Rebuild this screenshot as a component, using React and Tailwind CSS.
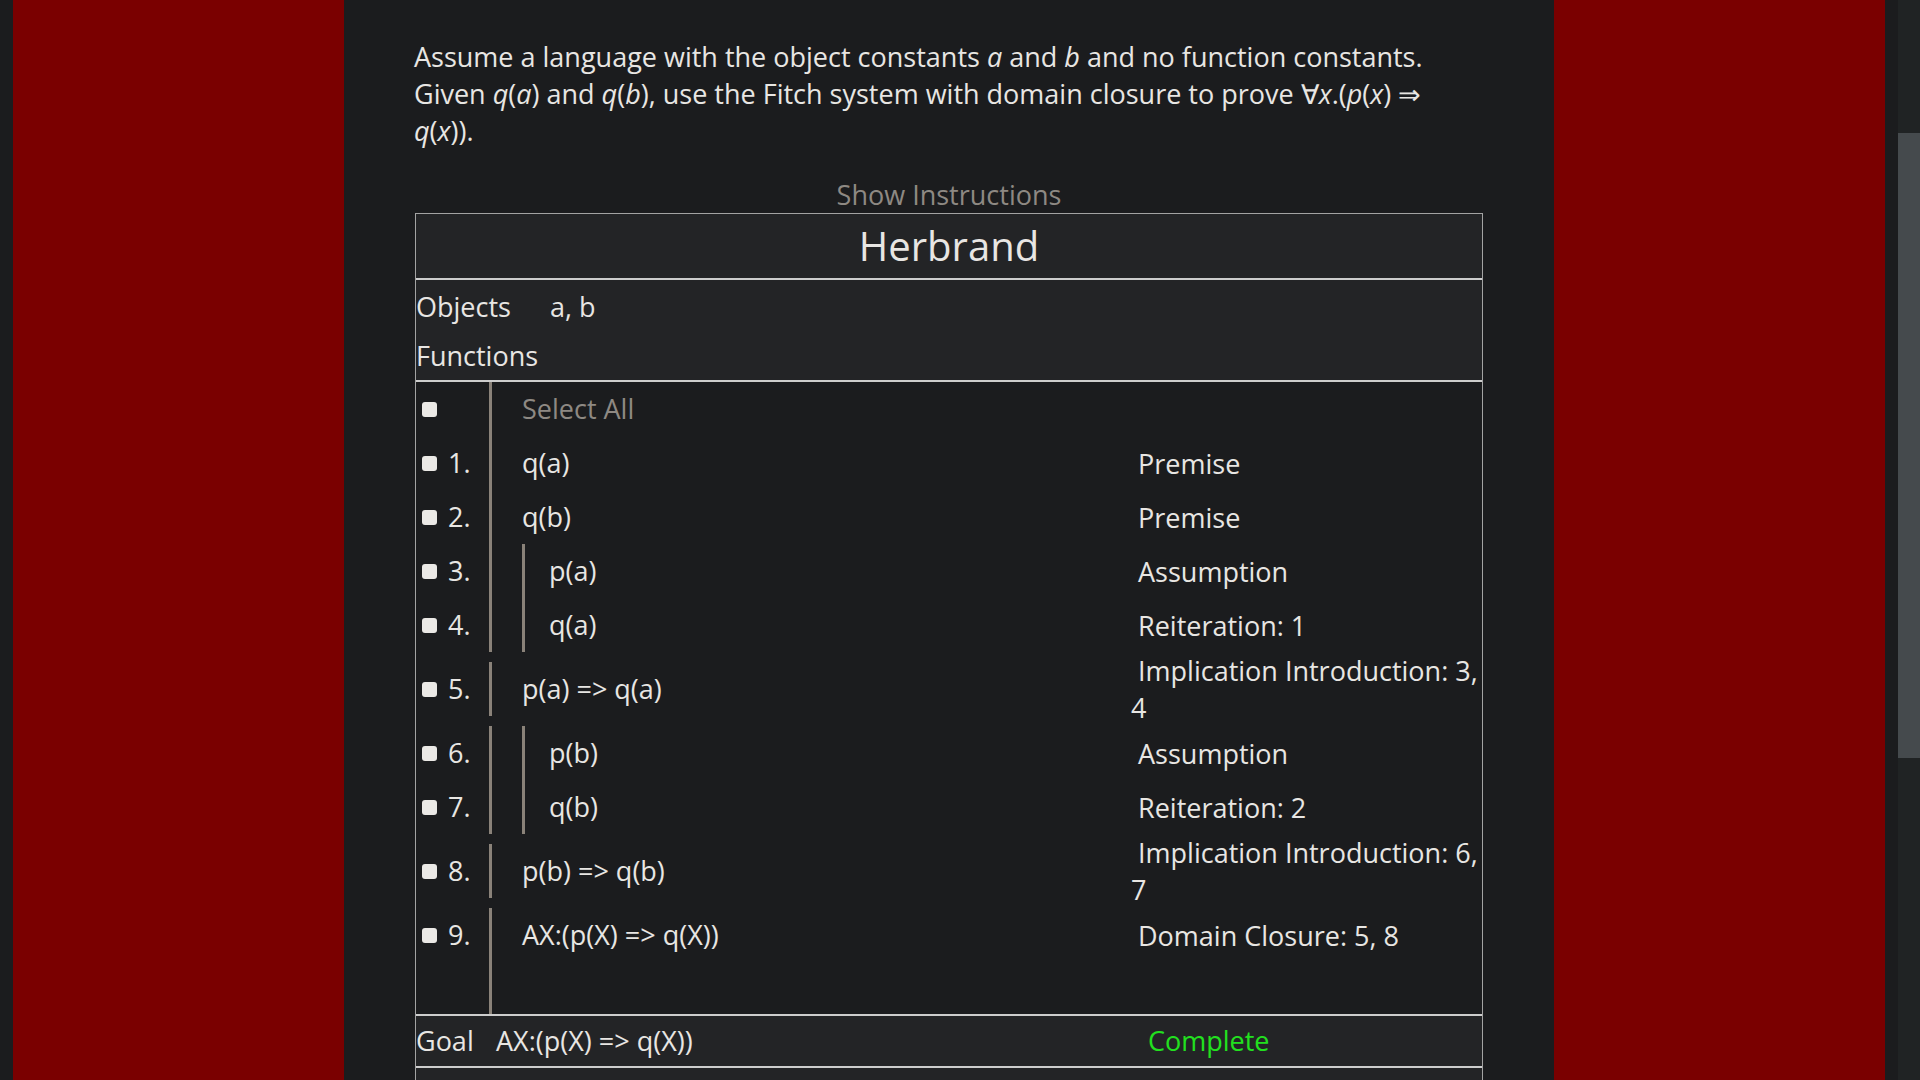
import React from "react";

const BAR = "border-[#8a8279]";

function Check() {
  return <span className="block w-[15px] h-[15px] rounded-[3px] bg-[#ebe9e6] shrink-0" />;
}

function Row({ n, f, j, nested, tall, gray, empty }) {
  return (
    <div className={`flex items-center ${tall ? "h-[74px]" : empty ? "h-[52px]" : "h-[54px]"}`}>
      <div className="w-[73px] h-full flex items-center pl-[6px]">
        {!empty && <Check />}
        {n && <span className="ml-[11px]">{n}</span>}
      </div>
      <div className={`w-[642px] ${empty ? "h-[52px]" : "h-[54px]"} border-l-[3px] ${BAR} pl-[30px] flex items-center`}>
        {nested ? (
          <div className={`h-full border-l-[3px] ${BAR} pl-[24px] flex items-center`}>{f}</div>
        ) : (
          <span className={gray ? "text-[#8e8983]" : ""}>{f}</span>
        )}
      </div>
      <div className="flex-1 leading-[37px] pr-[2px]">{j ? "\u00a0" + j : ""}</div>
    </div>
  );
}

const rows = [
  { n: "1.", f: "q(a)", j: "Premise" },
  { n: "2.", f: "q(b)", j: "Premise" },
  { n: "3.", f: "p(a)", j: "Assumption", nested: true },
  { n: "4.", f: "q(a)", j: "Reiteration: 1", nested: true },
  { n: "5.", f: "p(a) => q(a)", j: "Implication Introduction: 3, 4", tall: true },
  { n: "6.", f: "p(b)", j: "Assumption", nested: true },
  { n: "7.", f: "q(b)", j: "Reiteration: 2", nested: true },
  { n: "8.", f: "p(b) => q(b)", j: "Implication Introduction: 6, 7", tall: true },
  { n: "9.", f: "AX:(p(X) => q(X))", j: "Domain Closure: 5, 8" },
];

export default function App() {
  return (
    <div className="h-[1080px] w-[1920px] overflow-hidden flex bg-[#1b1c1e] font-['Open_Sans',sans-serif] text-[#e8e6e3] text-[27px]">
      <div className="w-[1898px] h-full flex px-[13px]">
        <div className="w-[331px] h-full bg-[#7a0000]" />
        <div className="w-[1210px] h-full px-[71px] pt-[38px] bg-[#1b1c1e]">
          <p className="leading-[37px] -ml-[1px]">
            Assume a language with the object constants <i>a</i> and <i>b</i> and no function constants. Given{" "}
            <i>q</i>(<i>a</i>) and <i>q</i>(<i>b</i>), use the Fitch system with domain closure to prove ∀<i>x</i>.(
            <i>p</i>(<i>x</i>) ⇒ <i>q</i>(<i>x</i>)).
          </p>
          <div className="mt-[27px] leading-[37px] text-center text-[#8e8983]">Show Instructions</div>
          <div className="border border-[#a3a3a3]">
            <div className="h-[64px] flex items-center justify-center bg-[#232426] text-[40px]">Herbrand</div>
            <div className="h-[2px] bg-[#cdcdcd]" />
            <div className="bg-[#232426] pt-[3px]">
              <div className="h-[49px] flex items-center">
                <span className="w-[134px]">Objects</span>
                <span>a, b</span>
              </div>
              <div className="h-[48px] flex items-center">
                <span className="w-[134px]">Functions</span>
              </div>
            </div>
            <div className="h-[2px] bg-[#cdcdcd]" />
            <div className="bg-[#1b1c1e]">
              <Row f="Select All" gray />
              {rows.map((r) => (
                <Row key={r.n} {...r} />
              ))}
              <Row empty />
            </div>
            <div className="h-[2px] bg-[#cdcdcd]" />
            <div className="h-[50px] bg-[#232426] flex items-center">
              <span className="w-[80px]">Goal</span>
              <span className="w-[652px]">AX:(p(X) =&gt; q(X))</span>
              <span className="text-[#22e01f]">Complete</span>
            </div>
            <div className="h-[2px] bg-[#cdcdcd]" />
            <div className="h-[60px] bg-[#232426]" />
          </div>
        </div>
        <div className="w-[331px] h-full bg-[#7a0000]" />
      </div>
      <div className="w-[22px] h-full bg-[#202324] flex flex-col">
        <div className="mt-[133px] h-[625px] bg-[#454a4d]" />
      </div>
    </div>
  );
}
